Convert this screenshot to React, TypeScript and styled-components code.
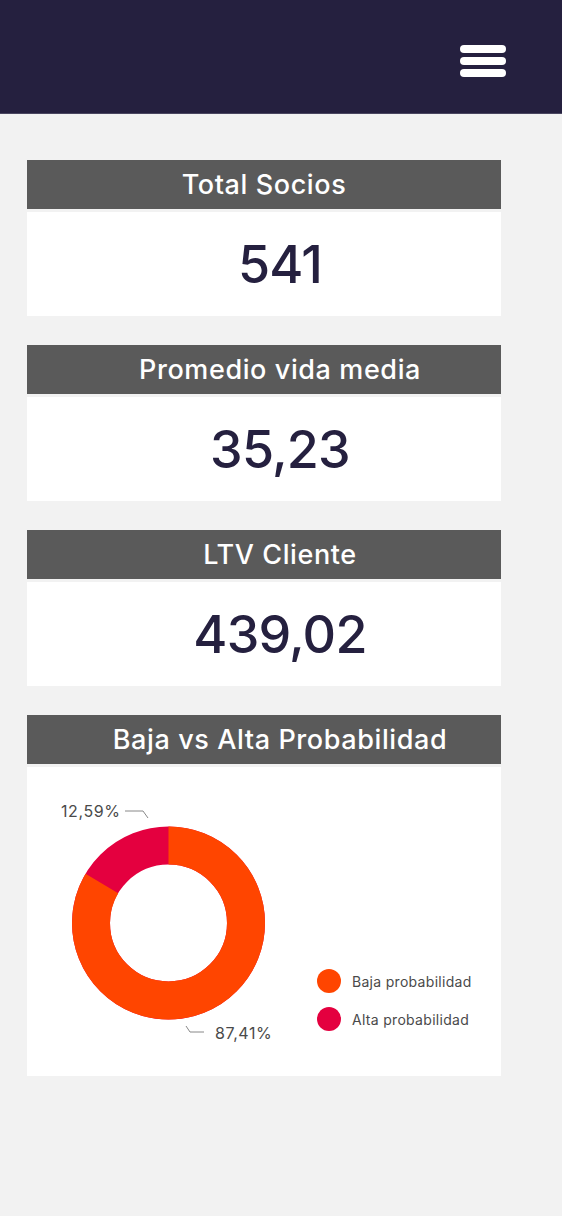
import styled, { createGlobalStyle } from 'styled-components'

const GlobalStyle = createGlobalStyle`
  html, body {
    margin: 0;
    padding: 0;
    background: #f2f2f2;
  }
  body {
    font-family: Inter, "Noto Sans", sans-serif;
  }
`

const RADIUS = 77.5
const CIRC = 2 * Math.PI * RADIUS

const stats = [
  { title: 'Total Socios', value: '541', shift: 0 },
  { title: 'Promedio vida media', value: '35,23', shift: 32 },
  { title: 'LTV Cliente', value: '439,02', shift: 32 },
]

export default function App() {
  // share of the ring drawn in orange, as in the chart
  const baja = 0.834

  return (
    <>
      <GlobalStyle />
      <TopBar>
        <MenuButton aria-label="menu">
          <MenuLine />
          <MenuLine />
          <MenuLine />
        </MenuButton>
      </TopBar>

      <Main>
        {stats.map((s) => (
          <Card key={s.title}>
            <CardHead $shift={s.shift}>{s.title}</CardHead>
            <StatBody>
              <StatValue>{s.value}</StatValue>
            </StatBody>
          </Card>
        ))}

        <Card>
          <CardHead $shift={32}>Baja vs Alta Probabilidad</CardHead>
          <ChartBody>
            <svg width="280" height="270" viewBox="0 0 280 270">
              <circle cx="141.5" cy="136" r={RADIUS} fill="none" stroke="#e4003f" strokeWidth="38" />
              <circle
                cx="141.5"
                cy="136"
                r={RADIUS}
                fill="none"
                stroke="#ff4500"
                strokeWidth="38"
                strokeDasharray={`${baja * CIRC} ${CIRC}`}
                transform="rotate(-90 141.5 136)"
              />
              <polyline points="98,24 116,24 121,31" fill="none" stroke="#888" strokeWidth="1" />
              <polyline points="159,239 163,245 177,245" fill="none" stroke="#888" strokeWidth="1" />
              <PctLabel x="34" y="30">12,59%</PctLabel>
              <PctLabel x="188" y="252">87,41%</PctLabel>
            </svg>
            <Legend>
              <LegendItem>
                <Dot $color="#ff4500" />
                Baja probabilidad
              </LegendItem>
              <LegendItem>
                <Dot $color="#e4003f" />
                Alta probabilidad
              </LegendItem>
            </Legend>
          </ChartBody>
        </Card>
      </Main>
    </>
  )
}

const TopBar = styled.header`
  height: 114px;
  background: #25203f;
  border-bottom: 1px solid #4a4660;
  display: flex;
  justify-content: flex-end;
  align-items: flex-start;
  padding: 45px 56px 0 0;
  box-sizing: border-box;
`

const MenuButton = styled.div`
  display: flex;
  flex-direction: column;
  gap: 4px;
`

const MenuLine = styled.span`
  display: block;
  width: 46px;
  height: 8px;
  border-radius: 4px;
  background: #ffffff;
`

const Main = styled.main`
  display: flex;
  flex-direction: column;
  gap: 29px;
  padding: 46px 61px 141px 27px;
`

const Card = styled.section`
  display: flex;
  flex-direction: column;
  gap: 3px;
`

const CardHead = styled.h2<{ $shift: number }>`
  margin: 0;
  height: 49px;
  background: #5a5a5a;
  color: #ffffff;
  font-size: 27px;
  font-weight: 500;
  letter-spacing: 0.6px;
  display: flex;
  align-items: center;
  justify-content: center;
  padding-left: ${(p) => p.$shift}px;
  box-sizing: border-box;
`

const StatBody = styled.div`
  height: 104px;
  background: #ffffff;
  display: flex;
  align-items: center;
  justify-content: center;
  padding-left: 32px;
`

const StatValue = styled.div`
  color: #25203f;
  font-size: 52px;
  font-weight: 500;
  letter-spacing: -0.8px;
`

const ChartBody = styled.div`
  background: #ffffff;
  display: flex;
  padding: 20px 0 19px;
  gap: 10px;
`

const PctLabel = styled.text`
  font-family: Inter, sans-serif;
  font-size: 16px;
  letter-spacing: 0.6px;
  fill: #4a4a4a;
`

const Legend = styled.div`
  align-self: flex-end;
  margin-bottom: 26px;
  display: flex;
  flex-direction: column;
  gap: 14px;
`

const LegendItem = styled.div`
  display: flex;
  align-items: center;
  gap: 11px;
  font-size: 14px;
  color: #4a4a4a;
  letter-spacing: 0.3px;
`

const Dot = styled.span<{ $color: string }>`
  width: 24px;
  height: 24px;
  border-radius: 50%;
  background: ${(p) => p.$color};
`
